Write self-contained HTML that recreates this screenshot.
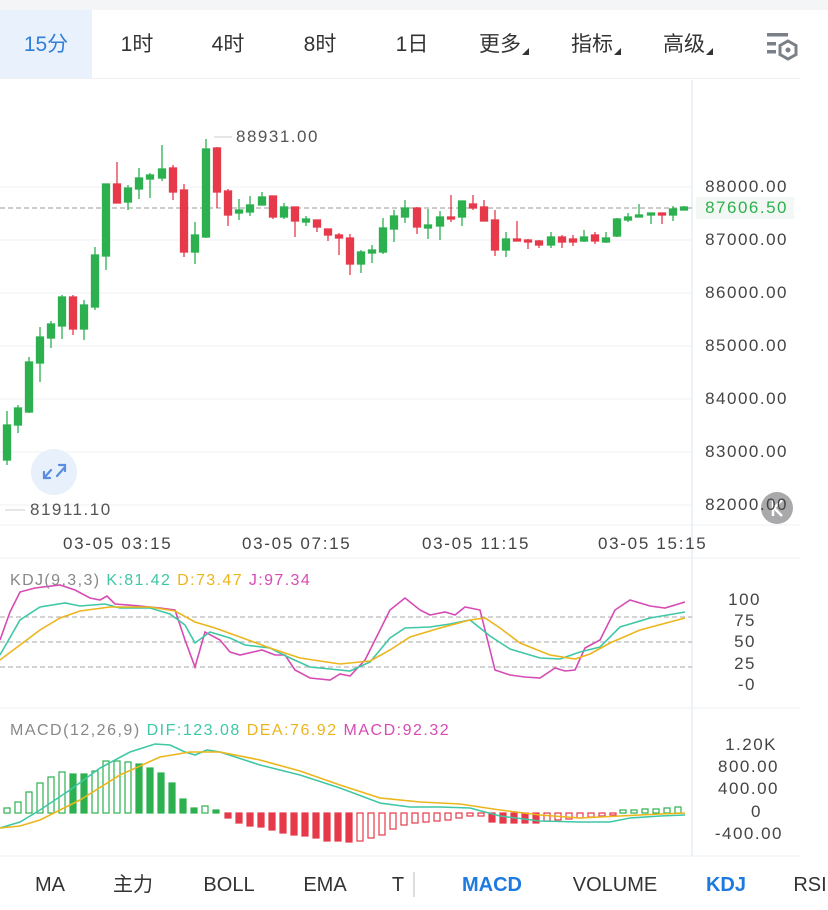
<!DOCTYPE html>
<html><head><meta charset="utf-8"><style>
*{margin:0;padding:0;box-sizing:border-box}
body{width:828px;height:910px;background:#fff;overflow:hidden;position:relative;font-family:"Liberation Sans","Noto Sans CJK SC",sans-serif}
.top{position:absolute;left:0;top:0;width:828px;height:10px;background:#f4f5f7}
.tab{position:absolute;top:32px;font-size:21px;line-height:26px;height:26px;color:#333;transform:translateX(-50%);white-space:nowrap}
.bt{position:absolute;top:872px;font-size:20px;line-height:26px;height:26px;color:#333;transform:translateX(-50%);white-space:nowrap}
.ax{position:absolute;font-size:17px;line-height:20px;color:#444;text-align:right;width:130px;letter-spacing:1.5px}
.tl{position:absolute;top:534px;font-size:17px;line-height:20px;color:#444;letter-spacing:1.7px;white-space:nowrap}
.tri{display:inline-block;width:0;height:0;border-left:7px solid transparent;border-bottom:7px solid #333;vertical-align:-4px;margin-left:1px}
</style></head><body>
<div class="top"></div>
<div style="position:absolute;left:0;top:10px;width:92px;height:68px;background:#e9f2fc"></div>
<div style="position:absolute;left:0;top:78px;width:800px;height:1px;background:#eef0f3"></div>
<div class="tab" style="left:46px;color:#2f7fd8">15分</div>
<div class="tab" style="left:137px">1时</div>
<div class="tab" style="left:228px">4时</div>
<div class="tab" style="left:320px">8时</div>
<div class="tab" style="left:412px">1日</div>
<div class="tab" style="left:504px">更多<span class="tri"></span></div>
<div class="tab" style="left:596px">指标<span class="tri"></span></div>
<div class="tab" style="left:688px">高级<span class="tri"></span></div>
<svg style="position:absolute;left:760px;top:28px" width="40" height="34"><rect x="7" y="5" width="21" height="3.5" fill="#7a7f88"/><rect x="7" y="14" width="9" height="3.5" fill="#7a7f88"/><rect x="7" y="22" width="9" height="3.5" fill="#7a7f88"/><polygon points="28,13 36,17.5 36,26.5 28,31 20,26.5 20,17.5" fill="none" stroke="#7a7f88" stroke-width="3"/><circle cx="28" cy="22" r="2.5" fill="#7a7f88"/></svg>

<svg style="position:absolute;left:0;top:0" width="828" height="910">
<g stroke="#eef0f3" stroke-width="1">
<line x1="0" y1="187" x2="692" y2="187"/><line x1="0" y1="240" x2="692" y2="240"/><line x1="0" y1="293" x2="692" y2="293"/><line x1="0" y1="346" x2="692" y2="346"/><line x1="0" y1="399" x2="692" y2="399"/><line x1="0" y1="452" x2="692" y2="452"/><line x1="0" y1="505" x2="692" y2="505"/>
<line x1="0" y1="525" x2="800" y2="525"/><line x1="0" y1="558" x2="800" y2="558"/><line x1="0" y1="708" x2="800" y2="708"/><line x1="0" y1="856" x2="800" y2="856"/>
</g>
<line x1="692" y1="80" x2="692" y2="856" stroke="#e6edf6" stroke-width="1.5"/>
<line x1="0" y1="208" x2="692" y2="208" stroke="#999" stroke-dasharray="5,3" stroke-width="1"/>
<rect x="696" y="197" width="98" height="22" fill="#f3f8f4"/>
<line x1="214" y1="137" x2="232" y2="137" stroke="#ccc"/>
<line x1="5" y1="510" x2="25" y2="510" stroke="#ccc"/>
<g stroke-width="1.3">
<g stroke="#2db04f" fill="#2db04f">
<line x1="7" y1="411" x2="7" y2="465"/><rect x="3.5" y="425" width="7" height="35"/>
<line x1="18" y1="405" x2="18" y2="433"/><rect x="14.5" y="408" width="7" height="17"/>
<line x1="29" y1="357" x2="29" y2="413"/><rect x="25.5" y="362" width="7" height="50"/>
<line x1="40" y1="327" x2="40" y2="382"/><rect x="36.5" y="337" width="7" height="26"/>
<line x1="51" y1="321" x2="51" y2="348"/><rect x="47.5" y="324" width="7" height="14"/>
<line x1="62" y1="295" x2="62" y2="339"/><rect x="58.5" y="297" width="7" height="29"/>
<line x1="84" y1="300" x2="84" y2="340"/><rect x="80.5" y="305" width="7" height="24"/>
<line x1="95" y1="247" x2="95" y2="310"/><rect x="91.5" y="255" width="7" height="52"/>
<line x1="106" y1="184" x2="106" y2="270"/><rect x="102.5" y="184" width="7" height="72"/>
<line x1="128" y1="185" x2="128" y2="210"/><rect x="124.5" y="188" width="7" height="14"/>
<line x1="139" y1="168" x2="139" y2="199"/><rect x="135.5" y="178" width="7" height="11"/>
<line x1="150" y1="173" x2="150" y2="198"/><rect x="146.5" y="175" width="7" height="4"/>
<line x1="162" y1="145" x2="162" y2="181"/><rect x="158.5" y="169" width="7" height="9"/>
<line x1="195" y1="222" x2="195" y2="264"/><rect x="191.5" y="235" width="7" height="17"/>
<line x1="206" y1="139" x2="206" y2="238"/><rect x="202.5" y="149" width="7" height="88"/>
<line x1="239" y1="199" x2="239" y2="220"/><rect x="235.5" y="210" width="7" height="3"/>
<line x1="250" y1="196" x2="250" y2="216"/><rect x="246.5" y="205" width="7" height="7"/>
<line x1="262" y1="192" x2="262" y2="205"/><rect x="258.5" y="197" width="7" height="8"/>
<line x1="284" y1="203" x2="284" y2="219"/><rect x="280.5" y="207" width="7" height="10"/>
<line x1="306" y1="216" x2="306" y2="226"/><rect x="302.5" y="219" width="7" height="3"/>
<line x1="361" y1="250" x2="361" y2="273"/><rect x="357.5" y="252" width="7" height="12"/>
<line x1="372" y1="245" x2="372" y2="263"/><rect x="368.5" y="250" width="7" height="3"/>
<line x1="383" y1="218" x2="383" y2="254"/><rect x="379.5" y="228" width="7" height="24"/>
<line x1="394" y1="210" x2="394" y2="242"/><rect x="390.5" y="216" width="7" height="13"/>
<line x1="405" y1="200" x2="405" y2="223"/><rect x="401.5" y="208" width="7" height="9"/>
<line x1="428" y1="209" x2="428" y2="239"/><rect x="424.5" y="225" width="7" height="3"/>
<line x1="440" y1="211" x2="440" y2="240"/><rect x="436.5" y="217" width="7" height="9"/>
<line x1="462" y1="201" x2="462" y2="226"/><rect x="458.5" y="201" width="7" height="16"/>
<line x1="506" y1="232" x2="506" y2="257"/><rect x="502.5" y="239" width="7" height="11"/>
<line x1="551" y1="232" x2="551" y2="248"/><rect x="547.5" y="237" width="7" height="8"/>
<line x1="584" y1="230" x2="584" y2="242"/><rect x="580.5" y="237" width="7" height="4"/>
<line x1="606" y1="232" x2="606" y2="243"/><rect x="602.5" y="238" width="7" height="4"/>
<line x1="617" y1="218" x2="617" y2="237"/><rect x="613.5" y="219" width="7" height="17"/>
<line x1="628" y1="213" x2="628" y2="222"/><rect x="624.5" y="217" width="7" height="3"/>
<line x1="639" y1="204" x2="639" y2="217"/><rect x="635.5" y="215" width="7" height="2"/>
<line x1="651" y1="213" x2="651" y2="224"/><rect x="647.5" y="213" width="7" height="2"/>
<line x1="673" y1="206" x2="673" y2="221"/><rect x="669.5" y="209" width="7" height="6"/>
<line x1="684" y1="206" x2="684" y2="210"/><rect x="680.5" y="207" width="7" height="3"/>
</g>
<g stroke="#e6394a" fill="#e6394a">
<line x1="73" y1="295" x2="73" y2="335"/><rect x="69.5" y="297" width="7" height="32"/>
<line x1="117" y1="162" x2="117" y2="203"/><rect x="113.5" y="184" width="7" height="19"/>
<line x1="173" y1="165" x2="173" y2="200"/><rect x="169.5" y="168" width="7" height="24"/>
<line x1="184" y1="184" x2="184" y2="257"/><rect x="180.5" y="190" width="7" height="62"/>
<line x1="217" y1="147" x2="217" y2="208"/><rect x="213.5" y="148" width="7" height="44"/>
<line x1="228" y1="189" x2="228" y2="226"/><rect x="224.5" y="191" width="7" height="24"/>
<line x1="273" y1="196" x2="273" y2="219"/><rect x="269.5" y="196" width="7" height="21"/>
<line x1="295" y1="207" x2="295" y2="237"/><rect x="291.5" y="207" width="7" height="14"/>
<line x1="317" y1="220" x2="317" y2="232"/><rect x="313.5" y="220" width="7" height="7"/>
<line x1="328" y1="229" x2="328" y2="241"/><rect x="324.5" y="229" width="7" height="6"/>
<line x1="339" y1="233" x2="339" y2="255"/><rect x="335.5" y="235" width="7" height="3"/>
<line x1="350" y1="234" x2="350" y2="275"/><rect x="346.5" y="238" width="7" height="26"/>
<line x1="417" y1="207" x2="417" y2="234"/><rect x="413.5" y="208" width="7" height="19"/>
<line x1="451" y1="195" x2="451" y2="222"/><rect x="447.5" y="217" width="7" height="2"/>
<line x1="473" y1="195" x2="473" y2="210"/><rect x="469.5" y="204" width="7" height="4"/>
<line x1="484" y1="200" x2="484" y2="221"/><rect x="480.5" y="207" width="7" height="14"/>
<line x1="495" y1="210" x2="495" y2="256"/><rect x="491.5" y="220" width="7" height="30"/>
<line x1="517" y1="221" x2="517" y2="241"/><rect x="513.5" y="239" width="7" height="2"/>
<line x1="528" y1="239" x2="528" y2="249"/><rect x="524.5" y="240" width="7" height="2"/>
<line x1="539" y1="240" x2="539" y2="248"/><rect x="535.5" y="241" width="7" height="4"/>
<line x1="562" y1="235" x2="562" y2="248"/><rect x="558.5" y="237" width="7" height="5"/>
<line x1="573" y1="235" x2="573" y2="246"/><rect x="569.5" y="239" width="7" height="3"/>
<line x1="595" y1="232" x2="595" y2="244"/><rect x="591.5" y="235" width="7" height="6"/>
<line x1="662" y1="213" x2="662" y2="224"/><rect x="658.5" y="213" width="7" height="2"/>
</g>
</g>
<circle cx="54" cy="472" r="23" fill="#e8f0fb"/>
<g stroke="#5a8de0" stroke-width="2.2" fill="none" stroke-linecap="round">
<path d="M57 476 L65 467 M59 465 H65 V471"/><path d="M51 470 L44 478 M44 472 V478 H50"/>
</g>
<circle cx="777" cy="508" r="16" fill="#a9a9ab"/>
<path d="M773 500 V516 M782 500 L774 508 L782 516" stroke="#fff" stroke-width="2.5" fill="none"/>

<g stroke="#aaa" stroke-dasharray="5,3" stroke-width="1"><line x1="0" y1="617" x2="692" y2="617"/><line x1="0" y1="642" x2="692" y2="642"/><line x1="0" y1="667" x2="692" y2="667"/></g>
<g fill="none" stroke-width="1.6">
<polyline stroke="#d64bb4" points="0,640 10,612 20,592 35,588 60,585 75,590 90,598 100,600 107,596 115,604 140,606 160,608 175,610 185,640 195,667 205,632 220,640 230,652 240,655 262,650 275,655 285,655 295,670 310,678 330,680 340,674 350,676 365,660 375,640 390,610 405,598 420,610 430,615 445,612 455,615 465,607 480,610 495,670 510,675 525,677 540,678 555,668 565,671 575,670 585,648 600,640 615,610 630,600 650,606 665,608 685,602"/>
<polyline stroke="#3fc7a6" points="0,655 20,620 40,607 65,603 80,606 105,604 120,608 150,608 170,614 185,625 195,643 210,632 230,638 245,645 270,648 290,658 310,667 330,669 350,671 370,662 390,638 405,628 430,627 450,624 470,620 490,636 510,649 540,658 560,659 580,652 600,647 620,627 650,618 685,612"/>
<polyline stroke="#ecb51c" points="0,660 20,645 40,630 60,618 80,611 110,607 150,607 175,611 195,622 215,628 240,637 270,648 300,658 340,664 370,661 390,650 410,637 440,628 470,620 485,618 500,628 520,643 550,655 575,659 590,654 610,643 640,630 685,618"/>
</g>

<g stroke="#2db04f" stroke-width="1.2">
<rect x="4" y="808" width="6" height="5" fill="#fff"/><rect x="15" y="802" width="6" height="11" fill="#fff"/><rect x="26" y="792" width="6" height="21" fill="#fff"/><rect x="37" y="783" width="6" height="30" fill="#fff"/><rect x="48" y="777" width="6" height="36" fill="#fff"/><rect x="59" y="772" width="6" height="41" fill="#fff"/>
<rect x="70" y="774" width="6" height="39" fill="#2db04f"/><rect x="81" y="774" width="6" height="39" fill="#2db04f"/>
<rect x="92" y="771" width="6" height="42" fill="#fff"/><rect x="103" y="761" width="6" height="52" fill="#fff"/><rect x="114" y="761" width="6" height="52" fill="#fff"/><rect x="125" y="762" width="6" height="51" fill="#fff"/>
<rect x="136" y="764" width="6" height="49" fill="#2db04f"/><rect x="147" y="768" width="6" height="45" fill="#2db04f"/><rect x="158" y="773" width="6" height="40" fill="#2db04f"/><rect x="169" y="783" width="6" height="30" fill="#2db04f"/><rect x="180" y="799" width="6" height="14" fill="#2db04f"/><rect x="191" y="808" width="6" height="5" fill="#2db04f"/><rect x="202" y="806" width="6" height="7" fill="#fff"/><rect x="213" y="810" width="6" height="3" fill="#2db04f"/>
<rect x="620" y="810" width="6" height="3" fill="#fff"/><rect x="631" y="810" width="6" height="3" fill="#fff"/><rect x="642" y="809" width="6" height="4" fill="#fff"/><rect x="653" y="809" width="6" height="4" fill="#fff"/><rect x="664" y="808" width="6" height="5" fill="#fff"/><rect x="675" y="807" width="6" height="6" fill="#fff"/>
</g>
<g stroke="#e6394a" stroke-width="1.2">
<g fill="#e6394a">
<rect x="225" y="813" width="6" height="5"/><rect x="236" y="813" width="6" height="10"/><rect x="247" y="813" width="6" height="13"/><rect x="258" y="813" width="6" height="14"/><rect x="269" y="813" width="6" height="17"/><rect x="280" y="813" width="6" height="20"/><rect x="291" y="813" width="6" height="22"/><rect x="302" y="813" width="6" height="23"/><rect x="313" y="813" width="6" height="25"/><rect x="324" y="813" width="6" height="28"/><rect x="335" y="813" width="6" height="28"/><rect x="346" y="813" width="6" height="29"/>
<rect x="489" y="813" width="6" height="9"/><rect x="500" y="813" width="6" height="10"/><rect x="511" y="813" width="6" height="10"/><rect x="522" y="813" width="6" height="10"/><rect x="533" y="813" width="6" height="10"/>
</g>
<g fill="#fff">
<rect x="357" y="813" width="6" height="28"/><rect x="368" y="813" width="6" height="25"/><rect x="379" y="813" width="6" height="22"/><rect x="390" y="813" width="6" height="16"/><rect x="401" y="813" width="6" height="12"/><rect x="412" y="813" width="6" height="10"/><rect x="423" y="813" width="6" height="9"/><rect x="434" y="813" width="6" height="8"/><rect x="445" y="813" width="6" height="7"/><rect x="456" y="813" width="6" height="5"/><rect x="467" y="813" width="6" height="3"/><rect x="478" y="813" width="6" height="3"/>
<rect x="544" y="813" width="6" height="8"/><rect x="555" y="813" width="6" height="7"/><rect x="566" y="813" width="6" height="6"/><rect x="577" y="813" width="6" height="5"/><rect x="588" y="813" width="6" height="4"/><rect x="599" y="813" width="6" height="3"/><rect x="610" y="813" width="6" height="2"/>
</g>
</g>
<g fill="none" stroke-width="1.6">
<polyline stroke="#3fc7a6" points="0,828 20,822 40,810 70,790 100,768 130,752 155,744 170,745 185,752 195,755 207,750 220,752 260,765 300,775 340,788 380,803 410,807 440,807 470,808 500,816 540,821 580,822 610,822 630,818 660,816 685,815"/>
<polyline stroke="#ecb51c" points="0,828 20,826 40,820 80,800 120,775 160,757 190,752 220,752 260,760 300,771 340,785 380,798 420,802 460,804 500,810 540,815 580,818 620,816 660,814 685,813"/>
</g>
<line x1="414" y1="872" x2="414" y2="897" stroke="#bbb"/>
</svg>

<div style="position:absolute;left:236px;top:127px;font-size:17px;line-height:20px;color:#555;letter-spacing:1.5px">88931.00</div>
<div style="position:absolute;left:30px;top:500px;font-size:17px;line-height:20px;color:#555;letter-spacing:1.5px">81911.10</div>
<div class="ax" style="left:658px;top:177px">88000.00</div>
<div class="ax" style="left:658px;top:198px;color:#2db04f">87606.50</div>
<div class="ax" style="left:658px;top:230px">87000.00</div>
<div class="ax" style="left:658px;top:283px">86000.00</div>
<div class="ax" style="left:658px;top:336px">85000.00</div>
<div class="ax" style="left:658px;top:389px">84000.00</div>
<div class="ax" style="left:658px;top:442px">83000.00</div>
<div class="ax" style="left:658px;top:495px">82000.00</div>
<div class="tl" style="left:63px">03-05 03:15</div>
<div class="tl" style="left:242px">03-05 07:15</div>
<div class="tl" style="left:422px">03-05 11:15</div>
<div class="tl" style="left:598px">03-05 15:15</div>
<div style="position:absolute;top:571px;left:10px;font-size:16px;line-height:20px;color:#888;white-space:nowrap;letter-spacing:1.4px">KDJ(9,3,3) <span style="color:#3fc7a6">K:81.42</span> <span style="color:#ecb51c">D:73.47</span> <span style="color:#d64bb4">J:97.34</span></div>
<div class="ax" style="left:631px;top:590px">100</div>
<div class="ax" style="left:626px;top:611px">75</div>
<div class="ax" style="left:626px;top:632px">50</div>
<div class="ax" style="left:626px;top:654px">25</div>
<div class="ax" style="left:626px;top:675px">-0</div>
<div style="position:absolute;top:721px;left:10px;font-size:16px;line-height:20px;color:#888;white-space:nowrap;letter-spacing:1.5px">MACD(12,26,9) <span style="color:#3fc7a6">DIF:123.08</span> <span style="color:#ecb51c">DEA:76.92</span> <span style="color:#d64bb4">MACD:92.32</span></div>
<div class="ax" style="left:647px;top:735px">1.20K</div>
<div class="ax" style="left:649px;top:757px">800.00</div>
<div class="ax" style="left:649px;top:779px">400.00</div>
<div class="ax" style="left:632px;top:802px">0</div>
<div class="ax" style="left:653px;top:824px">-400.00</div>

<div class="bt" style="left:50px">MA</div>
<div class="bt" style="left:133px">主力</div>
<div class="bt" style="left:229px">BOLL</div>
<div class="bt" style="left:325px">EMA</div>
<div class="bt" style="left:398px">T</div>
<div class="bt" style="left:492px;color:#1f7ae0;font-weight:bold">MACD</div>
<div class="bt" style="left:615px">VOLUME</div>
<div class="bt" style="left:726px;color:#1f7ae0;font-weight:bold">KDJ</div>
<div class="bt" style="left:810px">RSI</div>
</body></html>
